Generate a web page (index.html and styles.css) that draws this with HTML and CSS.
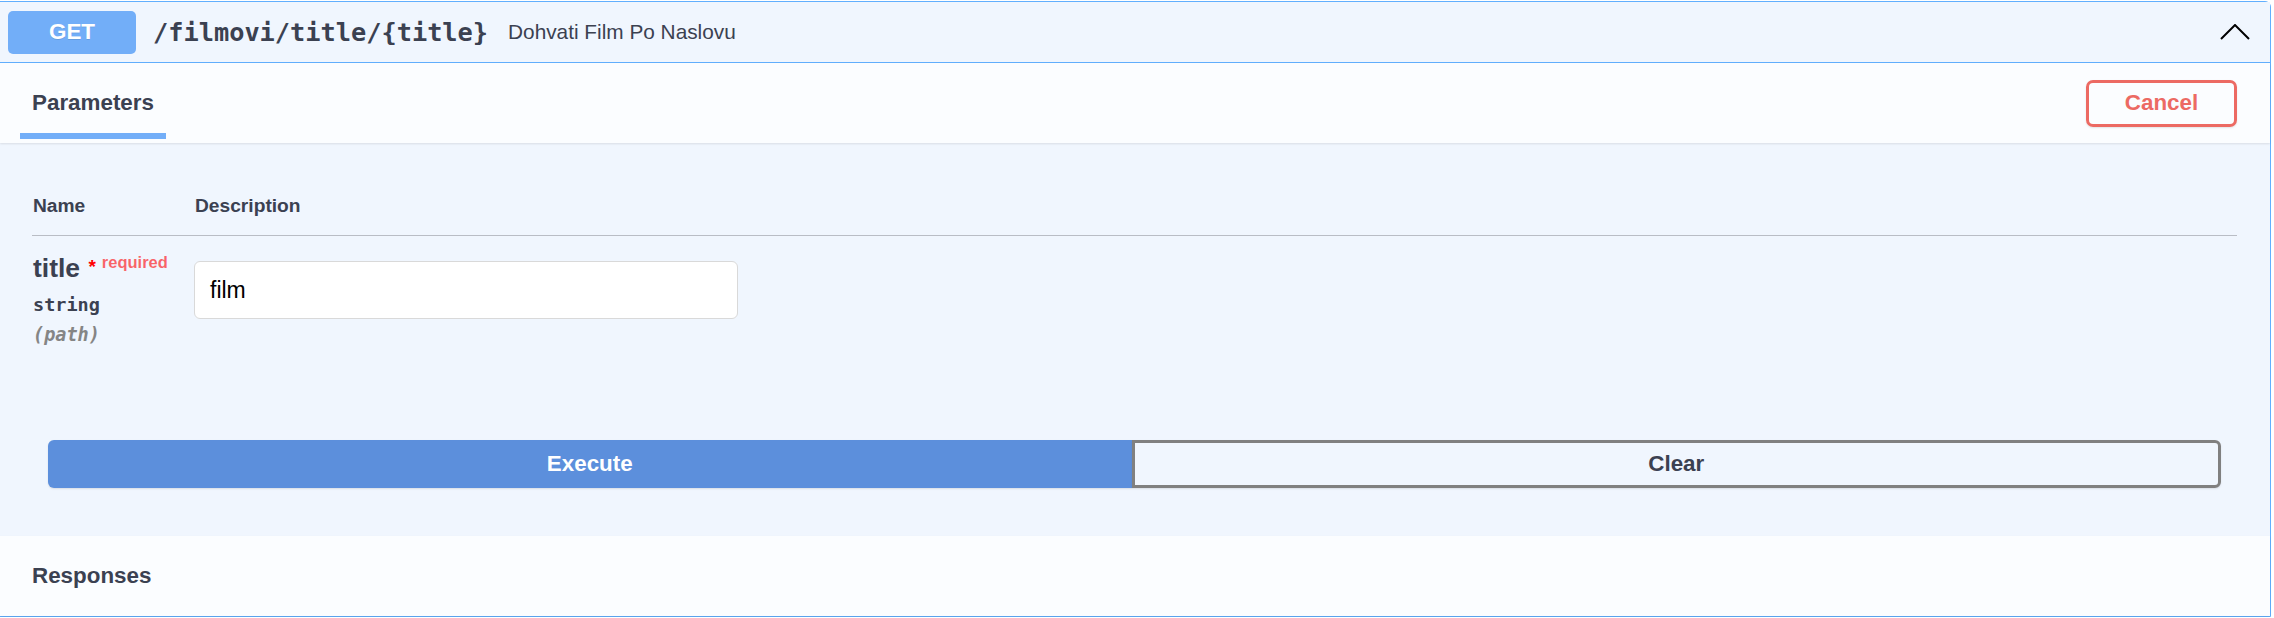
FILE: index.html
```html
<!DOCTYPE html>
<html>
<head>
<meta charset="utf-8">
<link rel="stylesheet" href="styles.css">
</head>
<body>
<div class="opblock">
  <div class="summary">
    <span class="method">GET</span>
    <span class="path">/filmovi/title/{title}</span>
    <span class="desc">Dohvati Film Po Naslovu</span>
    <span class="spacer"></span>
    <svg class="chevron" width="30" height="16" viewBox="0 0 30 16"><polyline points="1,15 15,1 29,15" fill="none" stroke="#000" stroke-width="2"/></svg>
  </div>
  <div class="section-header">
    <div class="tab">
      <span class="tab-label">Parameters</span>
      <span class="tab-line"></span>
    </div>
    <span class="spacer"></span>
    <button class="btn-cancel">Cancel</button>
  </div>
  <div class="params">
    <div class="table">
      <div class="th">Name</div>
      <div class="th">Description</div>
      <div class="td name-col">
        <div class="pname">title<span class="star">&nbsp;*</span><span class="req">required</span></div>
        <div class="ptype">string</div>
        <div class="pin">(path)</div>
      </div>
      <div class="td">
        <div class="input">film</div>
      </div>
    </div>
    <div class="btn-group">
      <button class="btn-exec">Execute</button>
      <button class="btn-clear">Clear</button>
    </div>
  </div>
  <div class="responses-header">
    <span class="resp-label">Responses</span>
  </div>
</div>
</body>
</html>
```
FILE: styles.css
```css
html, body {
  margin: 0;
  padding: 0;
  background: #ffffff;
  overflow: hidden;
}
body {
  font-family: "Liberation Sans", Arial, sans-serif;
  color: #3b4151;
}
.opblock {
  margin: 1px 0 0 -1px;
  width: 2272px;
  box-sizing: border-box;
  border: 1px solid #61affe;
  border-radius: 0 6px 0 0;
  background: #f0f6fe;
}
.summary {
  display: flex;
  align-items: center;
  height: 60px;
  padding: 0 20px 0 8px;
  border-bottom: 1px solid #61affe;
  background: #f0f6fe;
}
.method {
  width: 128px;
  height: 43px;
  box-sizing: border-box;
  display: flex;
  align-items: center;
  justify-content: center;
  background: #72aef8;
  border-radius: 5px;
  color: #ffffff;
  font-weight: 700;
  font-size: 22.4px;
  text-shadow: 0 1px 0 rgba(0,0,0,0.1);
}
.path {
  font-family: "DejaVu Sans Mono", "Liberation Mono", monospace;
  font-weight: 700;
  font-size: 25.3px;
  padding: 0 20px 0 17px;
  color: #3b4151;
}
.desc {
  font-size: 20.8px;
  color: #3b4151;
}
.spacer { flex: 1; }
.chevron { display: block; }
.section-header {
  display: flex;
  align-items: center;
  height: 80px;
  padding: 0 33px 0 20px;
  background: #fbfdff;
  box-shadow: 0 1px 2px rgba(0,0,0,0.1);
  position: relative;
}
.tab {
  display: flex;
  flex-direction: column;
  align-items: center;
  align-self: stretch;
  width: 146px;
  padding-top: 27px;
  box-sizing: border-box;
}
.tab-label {
  font-weight: 700;
  font-size: 22.4px;
  line-height: 26px;
}
.tab-line {
  margin-top: 17px;
  width: 146px;
  height: 6px;
  background: #72aef8;
}
.btn-cancel {
  width: 151px;
  height: 47px;
  border: 3px solid #ec6a63;
  border-radius: 7px;
  background: transparent;
  color: #ec6a63;
  font-family: "Liberation Sans", Arial, sans-serif;
  font-weight: 700;
  font-size: 22.4px;
  box-shadow: 0 1px 2px rgba(0,0,0,0.1);
  padding: 0;
}
.params {
  background: #f0f6fe;
  padding: 32px 32px 0 32px;
}
.table {
  display: grid;
  grid-template-columns: 162px 1fr;
  margin-right: 1px;
}
.th {
  font-weight: 700;
  font-size: 19.2px;
  line-height: 22px;
  padding: 20px 0 18px 1px;
  border-bottom: 1px solid #b9bdc5;
}
.td {
  padding: 17px 0 16px 0;
}
.name-col { padding-left: 1px; }
.pname {
  font-weight: 700;
  font-size: 26.5px;
  line-height: 30px;
}
.star {
  color: #ff0000;
  font-size: 19px;
  position: relative;
  top: -4px;
  padding-left: 3px;
}
.req {
  color: rgba(255,0,0,0.6);
  font-size: 16.5px;
  font-weight: 700;
  position: relative;
  top: -9px;
  padding-left: 6px;
}
.ptype {
  font-family: "DejaVu Sans Mono", "Liberation Mono", monospace;
  font-weight: 700;
  font-size: 18.5px;
  line-height: 22px;
  padding-top: 8px;
}
.pin {
  font-family: "DejaVu Sans Mono", "Liberation Mono", monospace;
  font-style: italic;
  font-weight: 700;
  font-size: 18.5px;
  line-height: 22px;
  color: #858585;
  padding-top: 8px;
}
.input {
  margin-top: 8px;
  width: 544px;
  height: 58px;
  box-sizing: border-box;
  border: 1px solid #d9d9d9;
  border-radius: 6px;
  background: #ffffff;
  padding: 0 15px;
  display: flex;
  align-items: center;
  color: #000;
  font-size: 23px;
}
.btn-group {
  display: flex;
  padding: 78px 17px 48px 16px;
}
.btn-group button {
  flex: 1;
  height: 48px;
  font-family: "Liberation Sans", Arial, sans-serif;
  font-weight: 700;
  font-size: 22.4px;
  box-shadow: 0 1px 2px rgba(0,0,0,0.1);
  padding: 0;
}
.btn-exec {
  background: #5c8fdc;
  color: #ffffff;
  border: none;
  border-radius: 6px 0 0 6px;
}
.btn-clear {
  background: transparent;
  color: #3b4151;
  border: 3px solid #808080;
  border-radius: 0 6px 6px 0;
}
.responses-header {
  display: flex;
  align-items: center;
  height: 80px;
  padding: 0 32px;
  background: #fbfdff;
  box-shadow: 0 1px 2px rgba(0,0,0,0.1);
}
.resp-label {
  font-weight: 700;
  font-size: 22.4px;
}
```
